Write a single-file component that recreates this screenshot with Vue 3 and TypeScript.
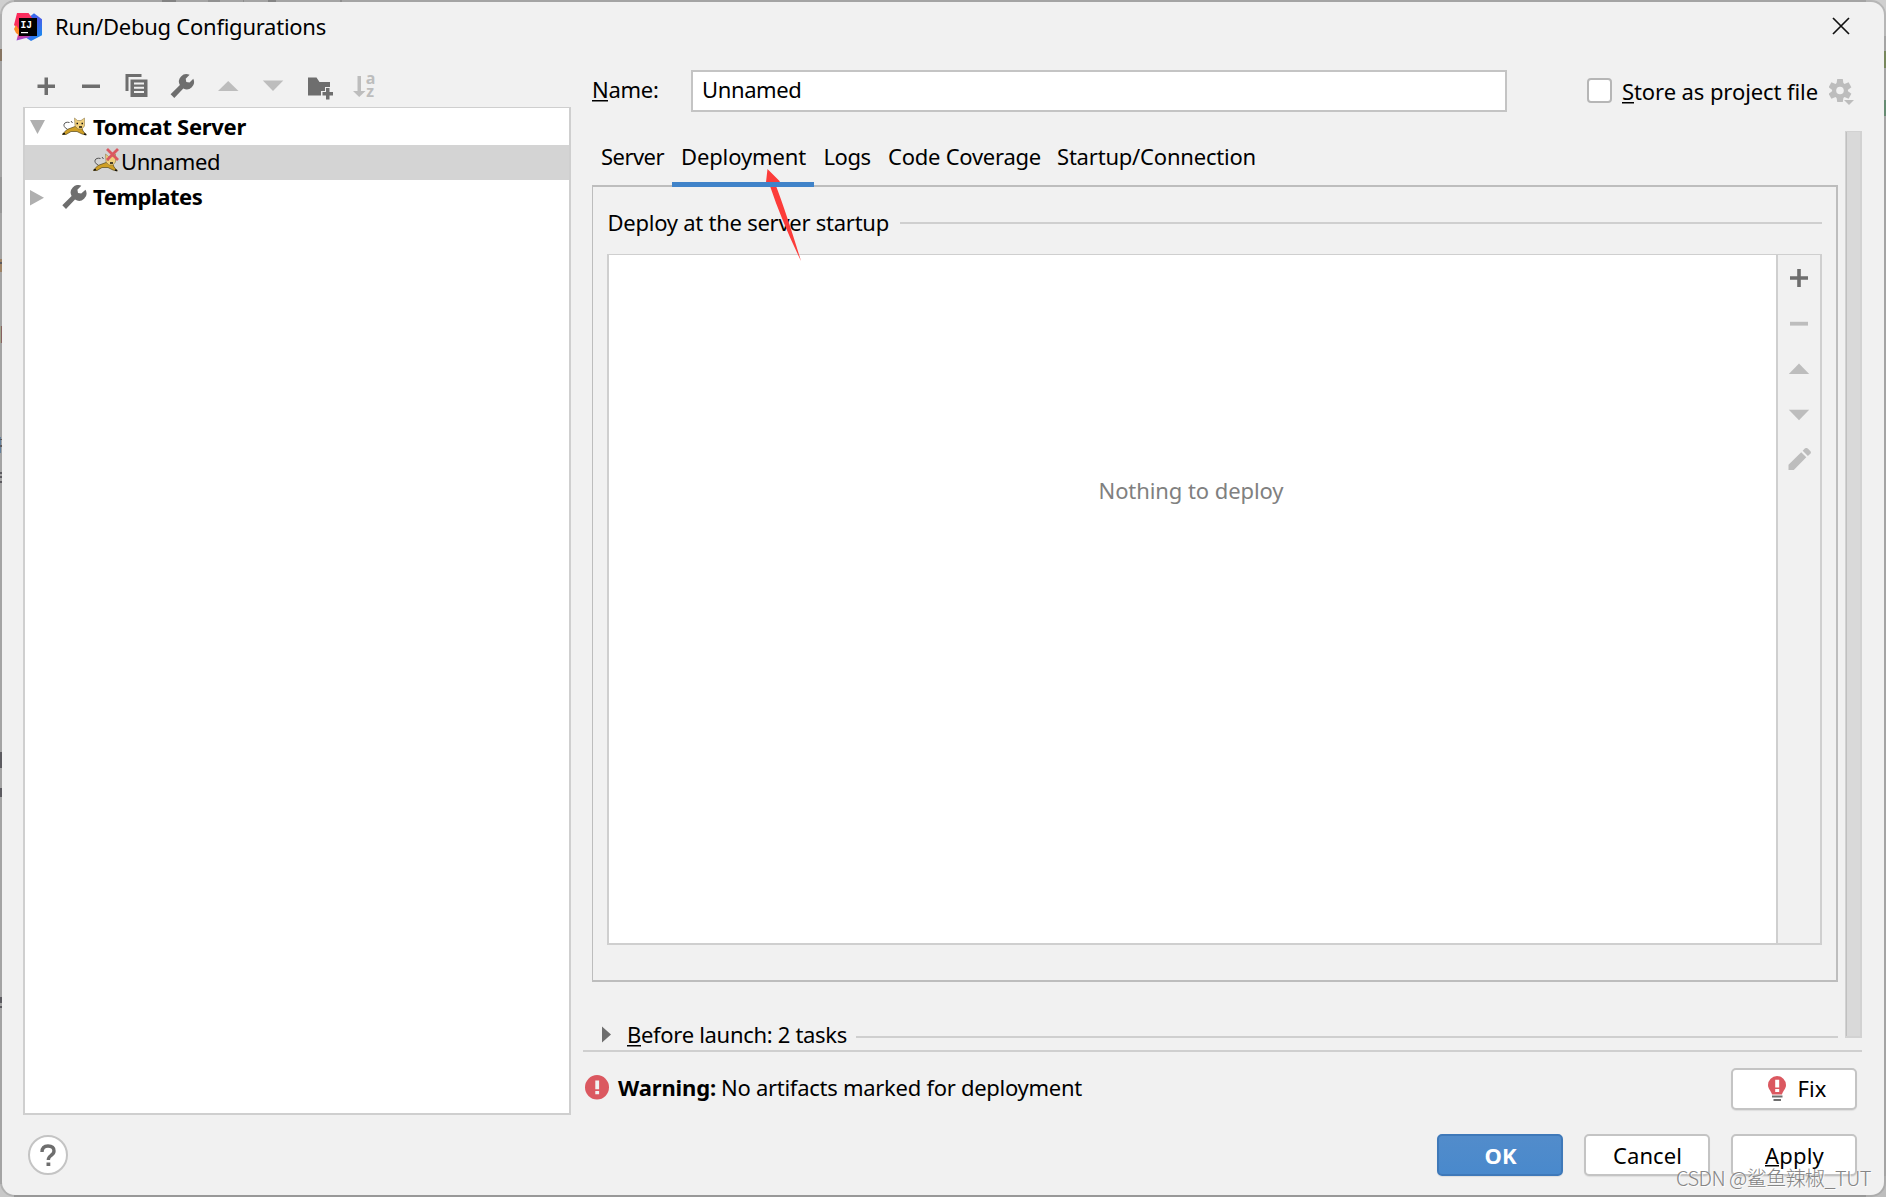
<script setup lang="ts">
import { ref, type Directive } from 'vue'

interface Tab {
  label: string
  width: number
  text: number
}

const tabs: Tab[] = [
  { label: 'Server', width: 80, text: 63 },
  { label: 'Deployment', width: 142, text: 125 },
  { label: 'Logs', width: 65, text: 47 },
  { label: 'Code Coverage', width: 170, text: 153 },
  { label: 'Startup/Connection', width: 214, text: 199 },
]
const activeTab = ref('Deployment')
const configName = ref('Unnamed')

// Tracks a label out (or in) to the given advance width.
const vFit: Directive<HTMLElement, number> = {
  mounted(el, { value }) {
    const range = document.createRange()
    range.selectNodeContents(el)
    const count = (el.textContent ?? '').length
    const spacing = (value - range.getBoundingClientRect().width) / count
    el.style.letterSpacing = `${spacing.toFixed(3)}px`
  },
}
</script>

<template>
  <div class="desktop">
    <svg class="backdrop" width="1886" height="1197">
      <rect width="1886" height="1197" fill="#b0b0b0" />
      <rect width="2" height="60" y="0" fill="#c4c4c4" />
      <rect width="2" height="36" y="177" fill="#989898" />
      <g fill="#2d2b33">
        <rect x="0" y="49" width="2" height="12" fill="#7a5a38" />
        <rect x="0" y="259" width="2" height="13" fill="#a5743c" />
        <rect x="0" y="262" width="2" height="2" />
        <rect x="0" y="326" width="1" height="17" fill="#a9ad84" />
        <rect x="1" y="326" width="1" height="17" fill="#7c3838" />
        <rect x="0" y="437" width="1" height="16" fill="#3a6da0" />
        <rect x="0" y="439" width="2" height="1" />
        <rect x="0" y="445" width="2" height="2" />
        <rect x="0" y="472" width="2" height="2" />
        <rect x="0" y="476" width="2" height="2" />
        <rect x="0" y="481" width="2" height="2" />
        <rect x="0" y="752" width="2" height="16" />
        <rect x="0" y="788" width="2" height="9" />
        <rect x="0" y="997" width="2" height="6" />
        <rect x="0" y="1006" width="2" height="2" />
        <rect x="162" y="0" width="14" height="2" fill="#747474" />
        <rect x="208" y="0" width="12" height="2" fill="#8d8d8d" />
        <rect x="243" y="0" width="1" height="2" fill="#888" />
        <rect x="268" y="0" width="8" height="2" fill="#777" />
        <rect x="340" y="0" width="2" height="2" fill="#888" />
      </g>
      <rect x="1884" y="51" width="2" height="17" fill="#5d7a2c" />
      <rect x="1884" y="100" width="2" height="16" fill="#3e8254" />
      <rect x="0" y="1195" width="1886" height="2" fill="#999" />
      <rect x="1866" y="1176" width="20" height="21" fill="#bdbdbd" />
      <rect x="1866" y="0" width="20" height="36" fill="#cfcfcf" />
      <rect x="0" y="0" width="14" height="14" fill="#cfcfcf" />
      <rect x="0" y="1184" width="14" height="13" fill="#c8c8c8" />
    </svg>

    <div class="dialog">
      <header class="titlebar">
        <svg class="logo" width="28" height="28" viewBox="0 0 28 28">
          <defs>
            <linearGradient id="lgA" x1="0" y1="0" x2="1" y2="1">
              <stop offset="0" stop-color="#fe2857" /><stop offset="1" stop-color="#f0386b" />
            </linearGradient>
            <linearGradient id="lgB" x1="0" y1="0" x2="0.6" y2="1">
              <stop offset="0" stop-color="#1f7df5" /><stop offset="0.5" stop-color="#4d5be8" /><stop offset="1" stop-color="#1d86ee" />
            </linearGradient>
            <linearGradient id="lgC" x1="0" y1="0" x2="0.3" y2="1">
              <stop offset="0" stop-color="#fb7a2b" /><stop offset="0.4" stop-color="#ee3d75" /><stop offset="1" stop-color="#8a4be8" />
            </linearGradient>
          </defs>
          <path d="M14 5 20 .3l8 6v16L17 28l-6-4z" fill="url(#lgB)" />
          <path d="M5 18 12 22 17 24 10 25.500 2.500 27.500z" fill="url(#lgC)" />
          <path d="M3 0h11.500l4 5.500L6 18 0 12z" fill="url(#lgA)" />
          <path d="M0 16 2 12l4 6v5l-4-3z" fill="#fc8a24" />
          <rect x="5" y="5" width="18" height="18" fill="#000" />
          <text x="6.400" y="14.800" fill="#fff" font-family="Liberation Mono, monospace" font-size="11" font-weight="700" textLength="11.500" lengthAdjust="spacingAndGlyphs">IJ</text>
          <rect x="7" y="19" width="7" height="1.200" fill="#fff" />
        </svg>
        <span v-fit="271" class="title">Run/Debug Configurations</span>
        <button class="plain close" aria-label="Close">
          <svg width="18" height="18" viewBox="0 0 18 18" fill="none" stroke="#111" stroke-width="1.700"><path d="M1 1 17 17M17 1 1 17" /></svg>
        </button>
      </header>

      <main class="body">
        <section class="sidebar">
          <div class="toolbar">
            <button class="plain"><svg width="32" height="32"><path d="M14.500 7.500h3.500v7h7v3.500h-7v7h-3.500v-7h-7v-3.500h7z" fill="#6e6e6e" /></svg></button>
            <button class="plain"><svg width="32" height="32"><path d="M7 14.500h18v3.500H7z" fill="#6e6e6e" /></svg></button>
            <button class="plain">
              <svg width="32" height="32">
                <path d="M5.500 4h16v3H8.500v14H5.500z" fill="#6e6e6e" />
                <path d="M10.500 9.500h17V27h-17z" fill="#6e6e6e" />
                <path d="M14 13.500h10M14 17.700h10M14 22h10" stroke="#f1f1f1" stroke-width="2" />
              </svg>
            </button>
            <button class="plain"><svg width="32" height="32"><path transform="translate(4.300 4)" d="M.3 20.300 9.600 11A7.400 7.400 0 0 1 19.300.8L15.400 4.700 16 8l3.200.6L23 4.800A7.400 7.400 0 0 1 13 14.600L4 24z" fill="#6e6e6e" /></svg></button>
            <button class="plain"><svg width="32" height="32"><path d="M7 21 17.200 11 27.500 21z" fill="#bdbdbd" /></svg></button>
            <button class="plain"><svg width="32" height="32"><path d="M6.800 10.500h20.500L17 21z" fill="#bdbdbd" /></svg></button>
            <button class="plain">
              <svg width="34" height="32">
                <path d="M8 7.500h8.500l3 4.500h10.500v5h-5v4h-4v4.500H8z" fill="#6e6e6e" />
                <path d="M26 18h3.500v4h3.500v3.500H29.500v4h-3.500v-4H22.500V22h3.500z" fill="#6e6e6e" />
              </svg>
            </button>
            <button class="plain">
              <svg width="32" height="32" fill="#bdbdbd">
                <path d="M10.500 6H14v15h4.500L12.200 27 6 21h4.500z" />
                <text x="18.800" y="14" class="az">a</text>
                <text x="19.200" y="27" class="az">z</text>
              </svg>
            </button>
          </div>

          <div class="tree">
            <div class="row first">
              <svg class="twisty" width="16" height="16"><path d="M0 1h15L7.500 15z" fill="#afafaf" /></svg>
              <svg class="cat" width="25" height="20" viewBox="0 0 25 20">
                <path d="M0 17.500 5 12.500 9 11 13 9.500 20 11.500 21 14 24.500 18 20 17 15 14.500 9 14.500 4 17.500Z" fill="#cf9f26" stroke="#55461b" stroke-width=".7" />
                <path d="M12.500 1 15.500 3.500h3.500L22.500 1v8l-2.500 3h-4l-3-3z" fill="#f0cf7c" stroke="#7f6a39" stroke-width=".5" />
                <path d="M5 12C-.5 9 2 4 7.500 5.500M9 4l1.500 2" fill="none" stroke="#444" stroke-width=".9" />
                <path d="M14.500 6.500h1.500M19.500 6.500H21M17 10h3M1 17l2-.5M22 17l2 .5" stroke="#111" stroke-width="1.500" />
              </svg>
              <b v-fit="153">Tomcat Server</b>
            </div>
            <div class="row selected">
              <svg class="cat" width="28" height="26" viewBox="0 -5 28 26">
                <path d="M0 17.500 5 12.500 9 11 13 9.500 20 11.500 21 14 24.500 18 20 17 15 14.500 9 14.500 4 17.500Z" fill="#cf9f26" stroke="#55461b" stroke-width=".7" />
                <path d="M12.500 1 15.500 3.500h3.500L22.500 1v8l-2.500 3h-4l-3-3z" fill="#f0cf7c" stroke="#7f6a39" stroke-width=".5" />
                <path d="M5 12C-.5 9 2 4 7.500 5.500M9 4l1.500 2" fill="none" stroke="#444" stroke-width=".9" />
                <path d="M14.500 6.500h1.500M17 10h3M1 17l2-.5M22 17l2 .5" stroke="#111" stroke-width="1.500" />
                <path d="M14-4 25 7M25-4 14 7" stroke="#db5860" stroke-width="2.800" />
              </svg>
              <span v-fit="99">Unnamed</span>
            </div>
            <div class="row">
              <svg class="twisty" width="16" height="16"><path d="M0 0v15.500L14 7.700z" fill="#afafaf" /></svg>
              <svg class="wrench" width="25" height="25"><path d="M.3 20.300 9.600 11A7.400 7.400 0 0 1 19.300.8L15.400 4.700 16 8l3.200.6L23.500 4.800A7.400 7.400 0 0 1 13 14.600L4 24z" fill="#6e6e6e" /></svg>
              <b v-fit="109.500">Templates</b>
            </div>
          </div>
        </section>

        <section class="editor">
          <div class="name-row">
            <label v-fit="66.500" class="name-label"><u>N</u>ame:</label>
            <div class="name-input"><span v-fit="99.500">{{ configName }}</span></div>
            <span class="checkbox"></span>
            <span v-fit="196" class="store"><u>S</u>tore as project file</span>
            <svg class="gear" width="26" height="28" viewBox="0 0 26 28">
              <g fill="#bdbdbd">
                <circle cx="11" cy="11.500" r="8" />
                <g v-for="a in 6" :key="a" :transform="`rotate(${a * 60} 11 11.500)`"><path d="M8.200 0h5.600l.7 5h-7z" /></g>
                <path d="M15 21h10l-5 5z" />
              </g>
              <circle cx="11" cy="11.500" r="3.800" fill="#f1f1f1" />
            </svg>
          </div>

          <div class="scroll-area">
            <div class="content">
              <nav class="tabs">
                <div
                  v-for="tab in tabs"
                  :key="tab.label"
                  class="tab"
                  :class="{ active: tab.label === activeTab }"
                  :style="{ width: `${tab.width}px` }"
                  @click="activeTab = tab.label"
                >
                  <span v-fit="tab.text">{{ tab.label }}</span>
                </div>
              </nav>
              <div class="panel">
                <div class="heading"><span v-fit="281.500">Deploy at the server startup</span><i class="rule"></i></div>
                <div class="deploy-list">
                  <div class="empty"><span v-fit="185">Nothing to deploy</span></div>
                  <div class="side">
                    <svg width="24" height="24"><path d="M10.200 3h3.600v7.200H21v3.600h-7.200V21h-3.600v-7.200H3v-3.600h7.200z" fill="#6e6e6e" /></svg>
                    <svg width="24" height="24"><path d="M3 10.800h18v3.800H3z" fill="#bdbdbd" /></svg>
                    <svg width="24" height="24"><path d="M1.800 17 12 6.500 22.200 17z" fill="#bdbdbd" /></svg>
                    <svg width="24" height="24"><path d="M1.800 7.800h20.400L12 18.300z" fill="#bdbdbd" /></svg>
                    <svg width="24" height="24"><path transform="translate(.500 -1)" d="M1 17.800 13.700 5.200 18.800 10.300 6.300 23H1zM15.200 3.800 17.300 1.600Q18.800.3 20.300 1.600L23 4.300Q24 5.800 22.800 6.800L20.400 9z" fill="#bdbdbd" /></svg>
                  </div>
                </div>
              </div>
              <div class="before">
                <svg width="10" height="17"><path d="M0 .5v16l9-8z" fill="#6e6e6e" /></svg>
                <span v-fit="220"><u>B</u>efore launch: 2 tasks</span>
                <i class="rule"></i>
              </div>
            </div>
            <div class="scrollbar"></div>
          </div>

          <div class="warning">
            <svg class="alert" width="24" height="25"><ellipse cx="12" cy="12.300" rx="12" ry="12.200" fill="#db5860" /><path d="M10.300 5.500h3.800v8.800h-3.800zM10.300 16h3.800v3.300h-3.800z" fill="#f1f1f1" /></svg>
            <b v-fit="98">Warning:</b>
            <span v-fit="361" class="message">No artifacts marked for deployment</span>
            <button class="btn fix">
              <svg width="18" height="26" viewBox="0 0 18 26">
                <path d="M9 0a9 9 0 0 1 9 9c0 4-3 5.500-4 9.500H4C3 14.500 0 13 0 9a9 9 0 0 1 9-9z" fill="#db5860" />
                <path d="M7.200 3.800h4v7.700h-4zM7.200 13h4v3h-4z" fill="#fff" />
                <path d="M4 19.500h10.500V21.500H4zM5.500 23h7.500v2H5.500z" fill="#6e6e6e" />
              </svg>
              <span v-fit="29">Fix</span>
            </button>
          </div>
        </section>
      </main>

      <footer class="footer">
        <button class="help" aria-label="Help">
          <svg width="18" height="24" fill="none" stroke="#6e6e6e"><path d="M3 9Q3 3 9 3T15 8Q15 10.500 12 12.500 9.300 14.500 9.300 17" stroke-width="3.400" /><path d="M7.500 19.500h3.800v3.500H7.500z" fill="#6e6e6e" stroke="none" /></svg>
        </button>
        <button class="btn ok"><b v-fit="32">OK</b></button>
        <button class="btn"><span v-fit="69">Cancel</span></button>
        <button class="btn"><span v-fit="59"><u>A</u>pply</span></button>
      </footer>
    </div>

    <svg class="arrow" width="40" height="96" viewBox="0 0 40 96">
      <path d="M3.500 0 16 12.500 11.500 15.500Q22 43 37 92 18 53 5.800 16.500L1.500 17.500z" fill="#fc3c3a" />
    </svg>
    <div v-fit="195" class="watermark">CSDN @鲨鱼辣椒_TUT</div>
  </div>
</template>

<style>
body {
  margin: 0;
  overflow: hidden;
}
</style>

<style scoped>
.desktop {
  position: relative;
  box-sizing: border-box;
  width: 1886px;
  height: 1197px;
  padding: 2px;
  overflow: hidden;
  font: 22px/35px "Noto Sans", "Noto Sans CJK SC", sans-serif;
  color: #000;
}
.backdrop {
  position: absolute;
  left: 0;
  top: 0;
}
.dialog {
  position: relative;
  width: 1882px;
  height: 1193px;
  display: flex;
  flex-direction: column;
  background: #f1f1f1;
  border-radius: 13px;
  box-shadow: 0 0 0 2px rgba(150, 150, 150, 0.45);
}
span,
b,
label {
  white-space: nowrap;
  flex: none;
}
svg {
  display: block;
  flex: none;
}
u {
  text-decoration: none;
  background: linear-gradient(#000, #000) 0 calc(100% - 3px) / 100% 1.5px no-repeat;
}
button {
  font: inherit;
  color: inherit;
}
.plain {
  border: 0;
  padding: 0;
  background: none;
}
.titlebar {
  height: 50px;
  display: flex;
  align-items: center;
  padding: 0 34px 0 12px;
}
.title {
  margin: 0 0 2px 13px;
}
.close {
  margin: 0 0 2px auto;
}
.body {
  display: flex;
  height: 1063px;
}
.sidebar {
  width: 548px;
  margin-left: 21px;
}
.toolbar {
  height: 55px;
  box-sizing: border-box;
  padding-top: 17.500px;
  display: flex;
}
.toolbar button {
  width: 45.300px;
  height: 32px;
  display: flex;
  justify-content: center;
}
.az {
  font: 700 16px "Open Sans", sans-serif;
}
.tree {
  box-sizing: border-box;
  height: 1008px;
  border: 2px solid #cfcfcf;
  border-top-width: 1px;
  background: #fff;
}
.row {
  height: 35px;
  display: flex;
  align-items: center;
  padding-left: 5px;
  line-height: 33px;
}
.row.first {
  height: 37px;
}
.row b {
  margin-left: 6px;
}
.row:not(.first) b,
.row:not(.first) span {
  margin-bottom: 2px;
}
.twisty {
  margin-right: 16px;
}
.row.selected {
  background: #d4d4d4;
  padding-left: 68px;
}
.row.selected .cat {
  margin-bottom: 3px;
}
.editor {
  width: 1279px;
  margin-left: 12px;
}
.name-row {
  height: 42px;
  padding: 18px 0 0 9px;
  display: flex;
}
.name-label {
  width: 99px;
  padding-top: 2px;
}
.name-input {
  box-sizing: border-box;
  width: 816px;
  height: 42px;
  border: 2px solid #c4c4c4;
  background: #fff;
  padding-left: 9px;
}
.checkbox {
  box-sizing: border-box;
  width: 25px;
  height: 25px;
  margin: 8px 10px 0 80px;
  border: 2px solid #b6b6b6;
  border-radius: 4px;
  background: #fff;
}
.store {
  padding-top: 4px;
}
.gear {
  margin: 9px 0 0 11px;
}
.scroll-area {
  display: flex;
  height: 919px;
  padding: 19px 0 0 9px;
  border-bottom: 2px solid #cfcfcf;
}
.content {
  width: 1246px;
}
.tabs {
  display: flex;
  height: 54px;
}
.tab {
  position: relative;
  box-sizing: border-box;
  height: 56px;
  line-height: 51px;
  text-align: center;
  padding-left: 1px;
}
.tab.active {
  border-bottom: 5px solid #4083c9;
  z-index: 1;
}
.panel {
  box-sizing: border-box;
  height: 797px;
  border: 2px solid #bdbdbd;
  border-left-width: 1px;
  padding: 18px 14px 0;
}
.heading {
  display: flex;
  align-items: center;
  height: 36px;
}
.heading span {
  margin: 0 0 2px 0.5px;
}
.rule {
  flex: 1;
  height: 2px;
  background: #cfcfcf;
}
.heading .rule {
  margin-left: 11px;
}
.deploy-list {
  box-sizing: border-box;
  height: 691px;
  margin-top: 13px;
  border: 2px solid #cfcfcf;
  border-top-width: 1px;
  display: flex;
}
.empty {
  flex: 1;
  background: #fff;
  color: #808080;
  text-align: center;
  padding: 218px 3px 0 0;
}
.side {
  width: 42px;
  border-left: 2px solid #cfcfcf;
  display: flex;
  flex-direction: column;
  align-items: center;
  gap: 21.400px;
  padding-top: 11px;
}
.before {
  display: flex;
  align-items: center;
  height: 31px;
  margin-top: 37px;
  padding-left: 10px;
}
.before span {
  margin-left: 15px;
}
.before .rule {
  margin: 4px 0 0 9px;
}
.scrollbar {
  box-sizing: border-box;
  width: 17px;
  height: 907px;
  margin-left: 7px;
  border: 1px solid #d2d2d2;
  border-width: 1px 2px 2px 1px;
  background: linear-gradient(90deg, #c0c0c0 1px, #d9d9d9 1px);
}
.warning {
  display: flex;
  align-items: center;
  height: 42px;
  padding: 15.500px 5px 0 2px;
}
.warning .alert {
  margin-bottom: 3px;
}
.warning b,
.message {
  margin: 0 0 2px 9px;
}
.warning .message {
  margin-left: 5px;
}
.btn {
  box-sizing: border-box;
  width: 126px;
  height: 42px;
  padding: 0;
  display: flex;
  align-items: center;
  justify-content: center;
  border: 2px solid #c4c4c4;
  border-radius: 5px;
  background: #fff;
  box-shadow: 0 1px 1px rgba(0, 0, 0, 0.08);
}
.fix {
  margin-left: auto;
  padding-left: 6px;
}
.fix span {
  margin-left: 12px;
}
.footer {
  display: flex;
  gap: 21px;
  padding: 19px 27px 0 26px;
}
.footer .btn {
  padding-left: 1px;
}
.help {
  box-sizing: border-box;
  width: 40px;
  height: 40px;
  padding: 0;
  margin: 1px auto 0 0;
  border: 2px solid #c4c4c4;
  border-radius: 50%;
  background: #fff;
  display: flex;
  align-items: center;
  justify-content: center;
}
.ok {
  color: #fff;
  background: linear-gradient(#528ccb, #4989cc);
  border-color: #3f79b9;
}
.arrow {
  position: absolute;
  left: 764px;
  top: 169px;
}
.watermark {
  position: absolute;
  left: 1676px;
  top: 1163px;
  white-space: nowrap;
  font: 300 20px/30px "Noto Sans CJK SC", sans-serif;
  color: #858585;
  text-shadow: 1px 1px 0 rgba(255, 255, 255, 0.8);
}
</style>
